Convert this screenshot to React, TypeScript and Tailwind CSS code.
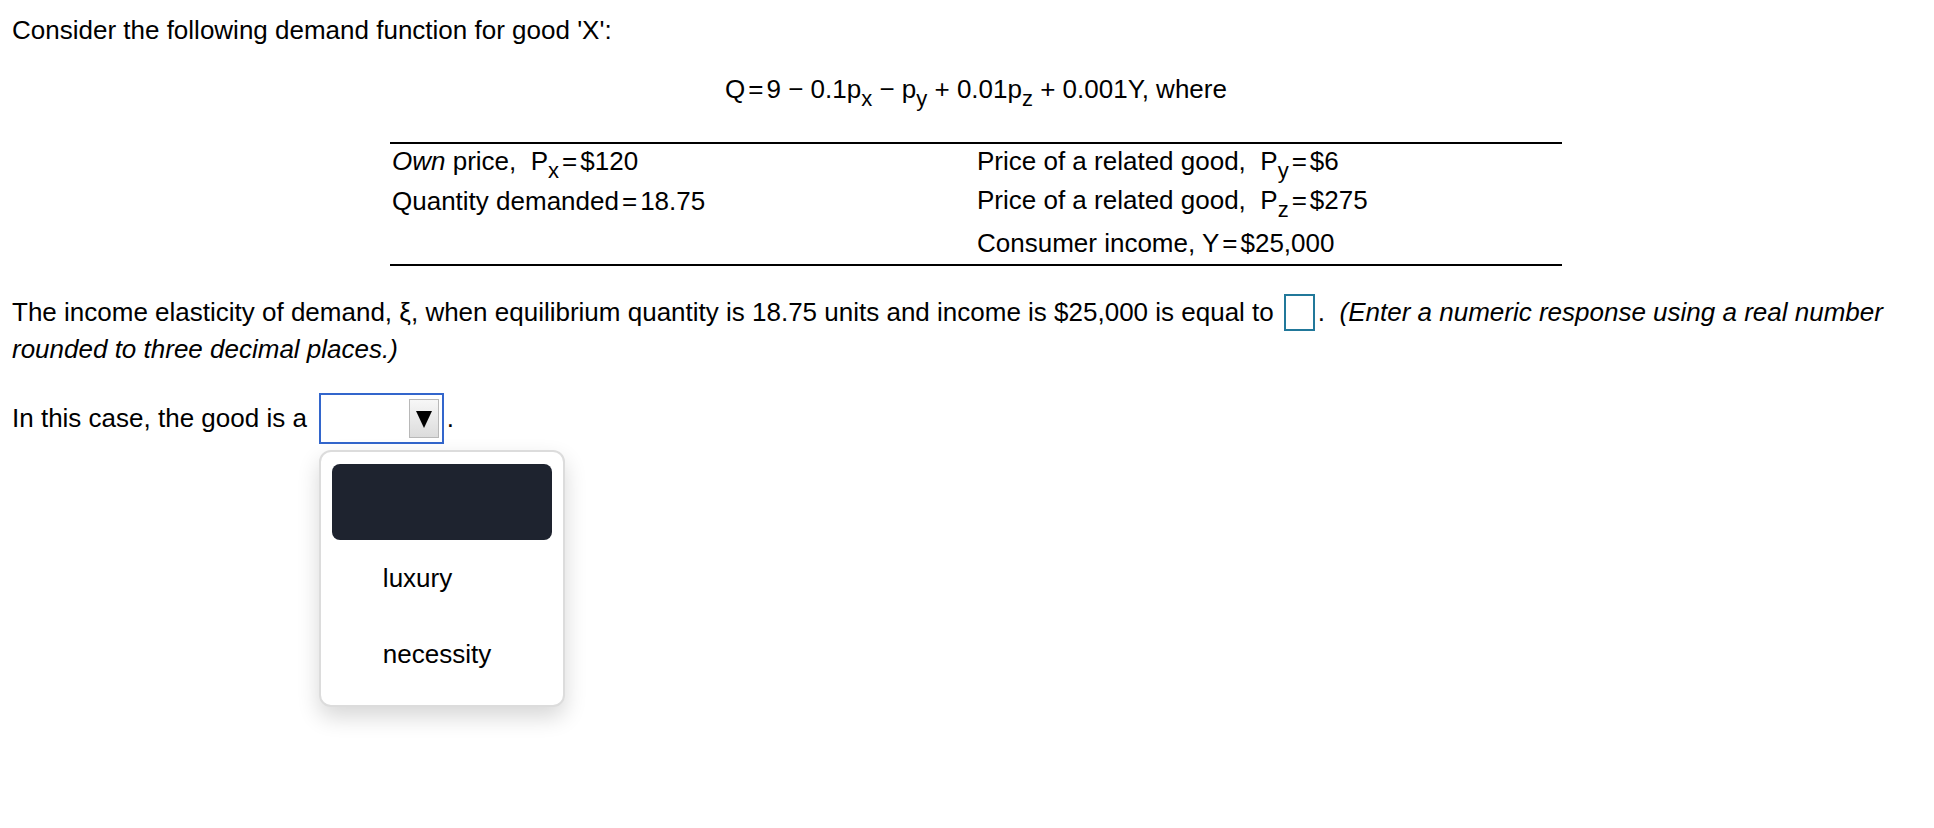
import React from "react";

function Sub({ children }: { children: React.ReactNode }) {
  return <span className="align-[-8px] text-[22px] leading-none">{children}</span>;
}

function Eq() {
  return <span className="px-[3px]">=</span>;
}

function Equation() {
  return (
    <div className="ml-[378px] w-[1172px] mt-[22px] text-center">
      Q<Eq />9 − 0.1p<Sub>x</Sub> − p<Sub>y</Sub> + 0.01p<Sub>z</Sub> + 0.001Y, where
    </div>
  );
}

function GivenTable() {
  return (
    <div className="ml-[378px] w-[1172px] mt-[32px] border-t-2 border-b-2 border-black">
      <div className="grid grid-cols-[587px_1fr]">
        <div className="h-[37px] flex items-center pl-[2px]">
          <span>
            <i>Own</i> price,{"\u00a0\u00a0"}P<Sub>x</Sub><Eq />$120
          </span>
        </div>
        <div className="h-[37px] flex items-center">
          <span>
            Price of a related good,{"\u00a0\u00a0"}P<Sub>y</Sub><Eq />$6
          </span>
        </div>
        <div className="h-[41px] flex items-center pl-[2px]">
          <span>
            Quantity demanded<Eq />18.75
          </span>
        </div>
        <div className="h-[41px] flex items-center">
          <span>
            Price of a related good,{"\u00a0\u00a0"}P<Sub>z</Sub><Eq />$275
          </span>
        </div>
        <div className="h-[42px]" />
        <div className="h-[42px] flex items-center">
          <span>
            Consumer income, Y<Eq />$25,000
          </span>
        </div>
      </div>
    </div>
  );
}

function AnswerBox() {
  return (
    <span className="inline-block align-[-10px] w-[31px] h-[37px] border-2 border-[#21789a] bg-white ml-[10px] mr-[3px]" />
  );
}

function Dropdown() {
  return (
    <div className="relative ml-[12px]">
      <div className="w-[125px] h-[51px] border-2 border-[#3366cc] bg-white flex items-center justify-end pr-[3px]">
        <div className="w-[30px] h-[39px] border border-[#b8b8b8] bg-gradient-to-b from-[#f7f7f7] to-[#dcdcdc] flex items-center justify-center">
          <svg width="18" height="20" viewBox="0 0 18 20">
            <polygon points="1,2 17,2 9,19" fill="#000" />
          </svg>
        </div>
      </div>
      <div className="absolute left-0 top-[57px] w-[246px] h-[257px] bg-white border-2 border-[#dcdcdc] rounded-[12px] shadow-[0_10px_22px_rgba(0,0,0,0.16)] px-[11px] pt-[12px] z-10">
        <div className="h-[76px] rounded-[8px] bg-[#1e232f]" />
        <div className="h-[76px] flex items-center pl-[51px]">luxury</div>
        <div className="h-[76px] flex items-center pl-[51px]">necessity</div>
      </div>
    </div>
  );
}

export default function App() {
  return (
    <div className="min-h-screen bg-white text-black font-['Liberation_Sans',Arial,Helvetica,sans-serif] text-[26px] leading-[37px] px-3 pt-3">
      <div>Consider the following demand function for good 'X':</div>
      <Equation />
      <GivenTable />
      <p className="mt-[28px]">
        The income elasticity of demand, ξ, when equilibrium quantity is 18.75 units and income is $25,000 is equal to
        <AnswerBox />.{"\u00a0\u00a0"}
        <i>(Enter a numeric response using a real number rounded to three decimal places.)</i>
      </p>
      <div className="mt-[25px] flex items-center">
        <span>In this case, the good is a</span>
        <Dropdown />
        <span className="ml-[3px]">.</span>
      </div>
    </div>
  );
}
